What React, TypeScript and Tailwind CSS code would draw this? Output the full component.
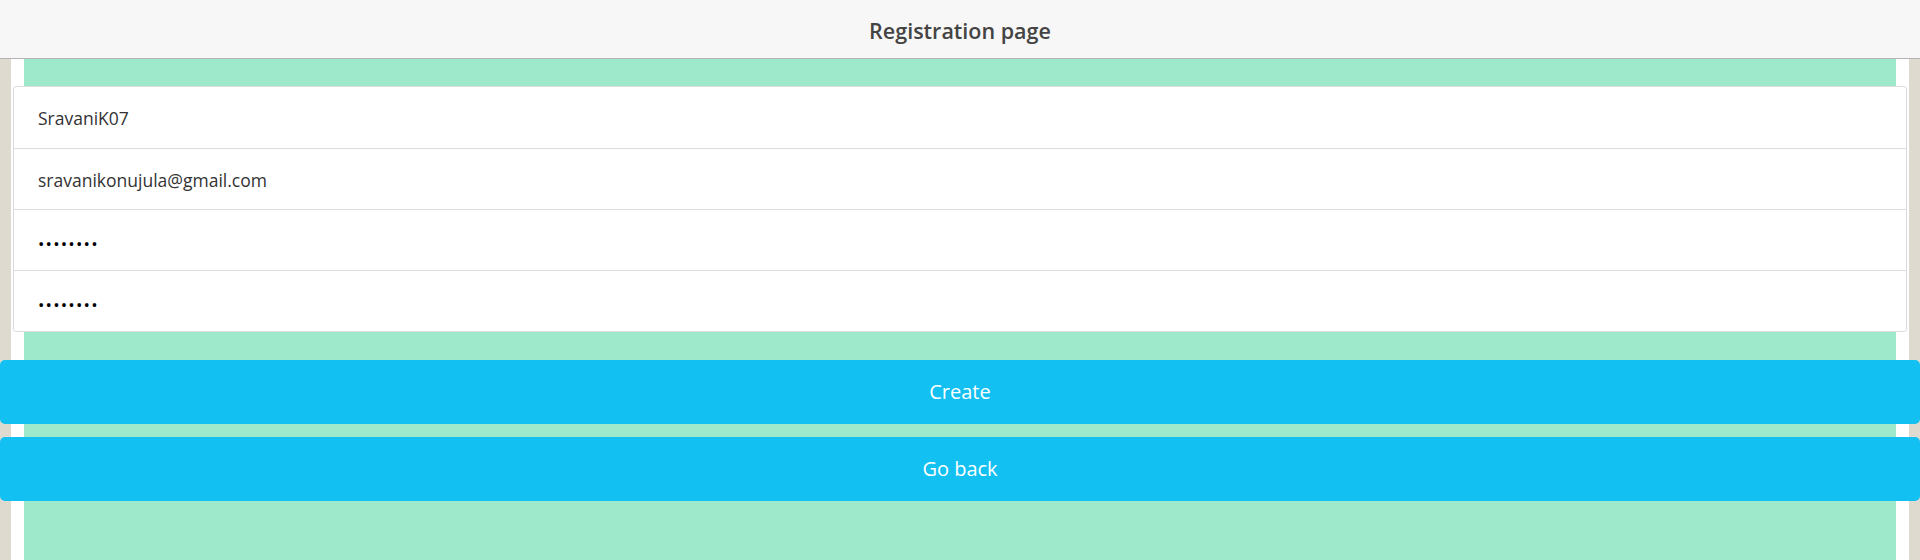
export default function App() {
  const fields = [
    { value: "SravaniK07", password: false },
    { value: "sravanikonujula@gmail.com", password: false },
    { value: "••••••••", password: true },
    { value: "••••••••", password: true },
  ];

  return (
    <div className="h-[560px] overflow-hidden font-['Open_Sans',sans-serif]">
      <header className="h-[59px] bg-[#f7f7f7] border-b border-[#b4b4b4] flex items-center justify-center">
        <h1 className="text-[21.5px] font-semibold text-[#444] translate-y-[2px]">Registration page</h1>
      </header>

      <div className="h-[501px] bg-[#dedad0] px-[11px]">
        <div className="h-full bg-white px-[13px]">
          <div className="h-full bg-[#9ee9cb] pt-[27px]">
            <div className="-mx-[11px] bg-white border border-[#dcdcdc] rounded-[3px]">
              {fields.map((f, i) => (
                <div
                  key={i}
                  className={
                    "h-[61px] flex items-center px-[24px] pt-[2px] " +
                    (i > 0 ? "border-t border-[#dcdcdc]" : "h-[60px]")
                  }
                >
                  {f.password ? (
                    <span className="text-[17px] text-black tracking-[1.2px] translate-y-[3px]">{f.value}</span>
                  ) : (
                    <span className="text-[17.5px] text-[#333]">{f.value}</span>
                  )}
                </div>
              ))}
            </div>

            <div className="-mx-[24px] mt-[28px] flex flex-col gap-[13px]">
              <button className="h-[64px] rounded-[5px] bg-[#12c0f2] text-white text-[20px]">
                Create
              </button>
              <button className="h-[64px] rounded-[5px] bg-[#12c0f2] text-white text-[20px]">
                Go back
              </button>
            </div>
          </div>
        </div>
      </div>
    </div>
  );
}
